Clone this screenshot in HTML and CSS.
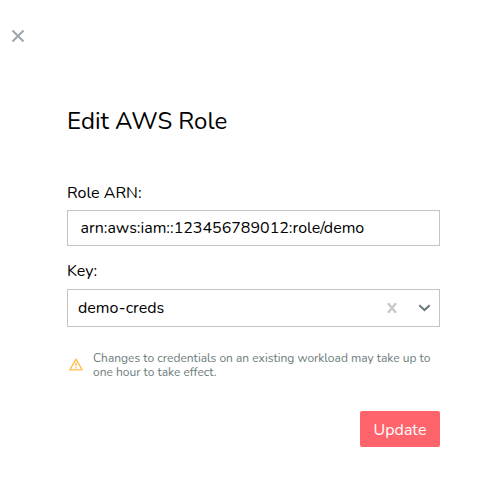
FILE: index.html
```html
<!DOCTYPE html>
<html lang="en">
<head>
<meta charset="utf-8">
<title>Edit AWS Role</title>
<link rel="stylesheet" href="styles.css">
</head>
<body>
<main class="panel">
  <button class="close" type="button" aria-label="Close">
    <svg width="12" height="12" viewBox="0 0 12 12"><path d="M.5.5l11 11M11.5.5l-11 11"/></svg>
  </button>
  <form class="form">
    <h1 class="title">Edit AWS Role</h1>
    <label class="label label-arn" for="arn">Role ARN:</label>
    <input class="input" id="arn" type="text" value="arn:aws:iam::123456789012:role/demo" spellcheck="false">
    <div class="label label-key">Key:</div>
    <div class="select">
      <span class="value">demo-creds</span>
      <svg class="clear" width="10" height="12" viewBox="0 0 10 12"><path d="M1 1.2l8 9.6M9 1.2L1 10.8"/></svg>
      <svg class="chevron" width="12" height="8" viewBox="0 0 12 8"><path d="M1.3 1.2L6.5 6l5.2-4.8"/></svg>
    </div>
    <div class="notice">
      <svg class="warning" width="14" height="13" viewBox="0 0 14 13"><path d="M7 1.1L13.2 11.9H.8z"/><path d="M7 4.7v3.5M7 9.1v1.3"/></svg>
      <p class="notice-text">Changes to credentials on an existing workload may take up to<br>one hour to take effect.</p>
    </div>
    <button class="update" type="button">Update</button>
  </form>
</main>
</body>
</html>
```
FILE: styles.css
```css
* { box-sizing: border-box; }
body {
  margin: 0;
  background: #fff;
  color: #000;
  font: 16px/22px Nunito, "Noto Sans", sans-serif;
}
svg { display: block; fill: none; flex: none; overflow: visible; }
.panel { height: 494px; padding: 30px 64px 0 67px; }
.close {
  display: block;
  margin: 0 0 0 -55px;
  padding: 0;
  border: 0;
  background: none;
  stroke: #9da8ab;
  stroke-width: 2.1;
}
.form { display: flex; flex-direction: column; padding-top: 63px; }
.title { margin: 0; font-size: 24px; line-height: 33px; font-weight: 400; white-space: nowrap; }
.label-arn { margin-top: 44px; }
.input {
  width: 373px;
  height: 36px;
  margin-top: 6px;
  padding: 0 12px 0 12.5px;
  border: 1px solid #c4c4c4;
  background: #fff;
  color: #000;
  font: inherit;
  outline: 0;
}
.label-key { margin-top: 14px; }
.select {
  display: flex;
  align-items: center;
  width: 373px;
  height: 38px;
  margin-top: 7px;
  padding: 0 9px 0 10px;
  border: 1px solid #c4c4c4;
}
.value { flex: 1; }
.clear { margin-right: 21px; stroke: #c8c8c8; stroke-width: 2.4; }
.chevron { stroke: #6c7b7c; stroke-width: 2.1; }
.notice { display: flex; margin-top: 24px; }
.warning { margin: 7px 10px 0 2px; stroke: #ffbf52; stroke-width: 1.4; stroke-linejoin: round; }
.notice-text { margin: 0; color: #6c7b7c; font-size: 12px; line-height: 14px; white-space: nowrap; }
.update {
  align-self: flex-end;
  width: 80px;
  height: 36px;
  margin-top: 32px;
  padding: 2px 0 0;
  border: 0;
  border-radius: 2px;
  background: #ff636b;
  color: #fff;
  font: inherit;
}
```
